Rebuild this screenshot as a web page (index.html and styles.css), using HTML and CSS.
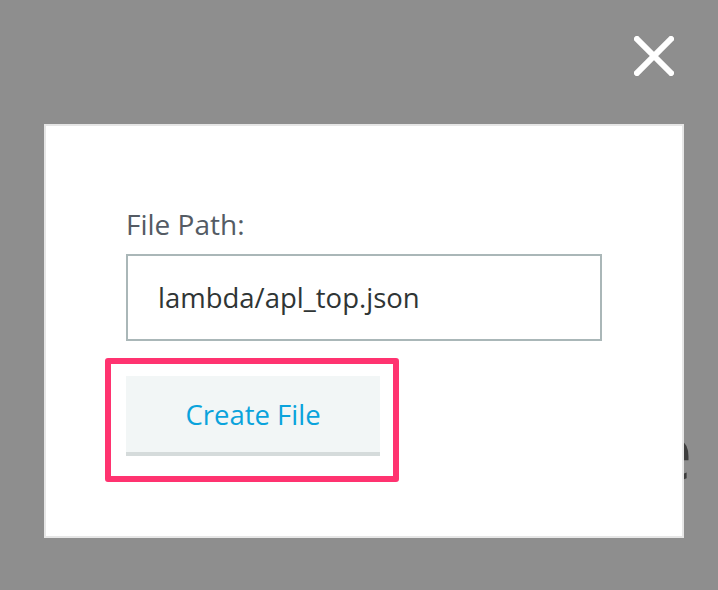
FILE: index.html
```html
<!DOCTYPE html>
<html>
<head>
<meta charset="utf-8">
<link rel="stylesheet" href="styles.css">
</head>
<body>
<main class="page">
  <h1 class="page-title">Save the template</h1>
</main>
<div class="overlay">
  <button class="close" aria-label="Close">
    <svg width="40" height="40" viewBox="0 0 40 40"><path d="M3 3 L37 37 M37 3 L3 37" stroke="#fff" stroke-width="6" stroke-linecap="square" fill="none"/></svg>
  </button>
  <div class="modal">
    <label class="field-label" for="path">File Path:</label>
    <div class="field-input" id="path">lambda/apl_top.json</div>
    <div class="highlight">
      <button class="create-btn">Create File</button>
    </div>
  </div>
</div>
</body>
</html>
```
FILE: styles.css
```css
html, body {
  margin: 0;
  padding: 0;
  background: #fff;
  font-family: "Open Sans", "Liberation Sans", sans-serif;
}
.page {
  padding-top: 400px;
  height: 590px;
  box-sizing: border-box;
  overflow: hidden;
}
.page-title {
  margin: 0 0 0 377px;
  font-weight: 400;
  font-size: 78px;
  line-height: 100px;
  word-spacing: 7px;
  color: #6e6e6e;
  white-space: nowrap;
}
.overlay {
  position: fixed;
  inset: 0;
  background: rgba(0, 0, 0, 0.443);
  display: flex;
  flex-direction: column;
  align-items: flex-start;
}
.close {
  align-self: flex-end;
  margin: 36px 44px 0 0;
  padding: 0;
  width: 40px;
  height: 40px;
  border: 0;
  background: none;
  display: flex;
}
.modal {
  margin: 48px 0 0 44px;
  width: 640px;
  height: 414px;
  box-sizing: border-box;
  background: #fff;
  border: 2px solid #e6e6e6;
  padding: 82px 0 0 80px;
  display: flex;
  flex-direction: column;
  align-items: flex-start;
}
.field-label {
  font-size: 28px;
  line-height: 33px;
  color: #545b64;
}
.field-input {
  margin-top: 13px;
  width: 476px;
  height: 87px;
  box-sizing: border-box;
  border: 2px solid #aab7b8;
  padding-left: 30px;
  display: flex;
  align-items: center;
  font-size: 27.5px;
  color: #2f3535;
}
.highlight {
  margin: 17px 0 0 -21px;
  border: 6px solid #ff3370;
  border-radius: 3px;
  padding: 12px 13px 20px 15px;
}
.create-btn {
  width: 254px;
  height: 80px;
  box-sizing: border-box;
  background: #f2f6f6;
  border: 0;
  border-bottom: 4px solid #d5dbdb;
  padding: 0;
  font-family: inherit;
  font-size: 27.5px;
  color: #0aa3dc;
}
```
